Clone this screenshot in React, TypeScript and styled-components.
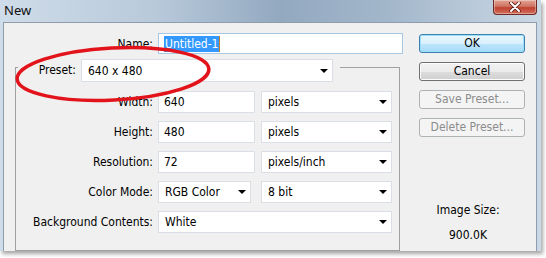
import styled, { createGlobalStyle } from 'styled-components'

const GlobalStyle = createGlobalStyle`
  html, body {
    margin: 0;
    padding: 0;
    background: #ffffff;
  }
  body {
    width: 546px;
    height: 258px;
    overflow: hidden;
    font-family: "DejaVu Sans Condensed", "DejaVu Sans", sans-serif;
    font-size: 12px;
    color: #000;
  }
`

const Page = styled.div`
  position: relative;
  width: 546px;
  height: 258px;
`

const Window = styled.div`
  display: flex;
  flex-direction: column;
  width: 541px;
  height: 251px;
  background: linear-gradient(90deg, #cfdce9 0%, #b9cadb 28%, #93a9c0 52%, #a3b7cb 72%, #cbd8e5 100%);
  box-shadow: 2px 3px 4px rgba(0, 0, 0, 0.35);
`

const TitleBar = styled.div`
  display: flex;
  align-items: flex-start;
  justify-content: space-between;
  height: 22px;
  padding-left: 4px;
`

const Title = styled.span`
  font-family: "Noto Sans", "DejaVu Sans", sans-serif;
  font-size: 13px;
  line-height: 20px;
  color: #111;
`

const CloseButton = styled.div`
  display: flex;
  align-items: center;
  justify-content: center;
  width: 42px;
  height: 14px;
  margin-right: 4px;
  border: 1px solid #6d2a22;
  border-top: none;
  border-radius: 0 0 4px 4px;
  background: linear-gradient(180deg, #e2a392 0%, #d07463 45%, #c0412f 55%, #d2705c 100%);
  box-shadow: inset 0 0 0 1px rgba(255, 255, 255, 0.35);
`

const Content = styled.div`
  flex: 1;
  display: flex;
  margin: 0 4px 0 3px;
  overflow: hidden;
  background: #f0f0f0;
  border-top: 1px solid #8e9cab;
  border-left: 1px solid #8e9cab;
  border-right: 1px solid #8e9cab;
`

const FormColumn = styled.div`
  display: flex;
  flex-direction: column;
  width: 396px;
  flex-shrink: 0;
  padding-top: 10px;
`

const NameRow = styled.div`
  display: flex;
  align-items: center;
  height: 21px;
`

const Label = styled.div<{ $width: number }>`
  width: ${p => p.$width}px;
  margin-right: 5px;
  flex-shrink: 0;
  text-align: right;
  line-height: 22px;
  white-space: nowrap;
`

const Field = styled.div<{ $width: number; $focused?: boolean; $height?: number }>`
  box-sizing: border-box;
  display: flex;
  align-items: center;
  flex-shrink: 0;
  width: ${p => p.$width}px;
  height: ${p => p.$height ?? 22}px;
  padding-left: 5px;
  background: #fff;
  border: 1px solid ${p => (p.$focused ? '#a7c8e4' : '#dadfe6')};
  white-space: nowrap;
`

const Selected = styled.span`
  background: #3399ff;
  color: #fff;
  padding: 1px;
  border-right: 1px solid #d0801c;
`

const SelectBox = styled(Field)`
  position: relative;
  padding-left: 6px;
`

const Arrow = styled.span`
  position: absolute;
  right: 4px;
  top: 50%;
  margin-top: -2px;
  width: 0;
  height: 0;
  border-left: 4px solid transparent;
  border-right: 4px solid transparent;
  border-top: 4px solid #000;
`

const GroupBox = styled.fieldset`
  box-sizing: border-box;
  width: 385px;
  height: 240px;
  margin: 5px 0 0 11px;
  padding: 16px 0 0 0;
  border: 1px solid #a0a0a0;
  min-width: 0;
`

const PresetLegend = styled.legend`
  display: flex;
  align-items: flex-start;
  height: 16px;
  margin-left: 2px;
  padding: 0 7px 0 0;
`

const Row = styled.div`
  display: flex;
  align-items: center;
  height: 22px;
  margin-bottom: 8px;
`

const Gap = styled.div<{ $w: number }>`
  width: ${p => p.$w}px;
  flex-shrink: 0;
`

const SideColumn = styled.div`
  display: flex;
  flex-direction: column;
  width: 136px;
  padding-top: 11px;
`

const ButtonStack = styled.div`
  display: flex;
  flex-direction: column;
  gap: 9px;
  padding-left: 19px;
`

const Button = styled.div<{ $variant: 'default' | 'normal' | 'disabled' }>`
  box-sizing: border-box;
  width: 106px;
  height: 19px;
  display: flex;
  align-items: center;
  justify-content: center;
  border-radius: 3px;
  line-height: 17px;
  ${p =>
    p.$variant === 'default'
      ? `
    border: 1px solid #3c7fb1;
    background: linear-gradient(180deg, #eaf6fd 0%, #d9f0fc 50%, #bee6fd 51%, #a7d9f5 100%);
    box-shadow: inset 0 0 0 1px #9ce0f8;
    color: #000;
  `
      : p.$variant === 'normal'
      ? `
    border: 1px solid #707070;
    background: linear-gradient(180deg, #f2f2f2 0%, #ebebeb 50%, #dddddd 51%, #cfcfcf 100%);
    box-shadow: inset 0 0 0 1px #fcfcfc;
    color: #000;
  `
      : `
    border: 1px solid #adb2b5;
    background: #f4f4f4;
    color: #8c8c8c;
  `}
`

const ImageInfo = styled.div`
  margin-top: 65px;
  text-align: center;
  line-height: 16px;
`

const InfoValue = styled.div`
  margin-top: 9px;
`

const Annotation = styled.svg`
  position: absolute;
  left: 0;
  top: 0;
  pointer-events: none;
`

export default function App() {
  return (
    <Page>
      <GlobalStyle />
      <Window>
        <TitleBar>
          <Title>New</Title>
          <CloseButton>
            <svg width="14" height="10" viewBox="0 0 14 10">
              <path d="M3 1 L11 9 M11 1 L3 9" stroke="#5a1a14" strokeWidth="3.6" strokeLinecap="round" />
              <path d="M3 1 L11 9 M11 1 L3 9" stroke="#ffffff" strokeWidth="2" strokeLinecap="round" />
            </svg>
          </CloseButton>
        </TitleBar>
        <Content>
          <FormColumn>
            <NameRow>
              <Label $width={149}>Name:</Label>
              <Field $width={245} $height={21} $focused>
                <Selected>Untitled-1</Selected>
              </Field>
            </NameRow>
            <GroupBox>
              <PresetLegend>
                <Label $width={58}>Preset:</Label>
                <SelectBox $width={252} $height={23}>
                  640 x 480
                  <Arrow />
                </SelectBox>
              </PresetLegend>
              <Row>
                <Label $width={137}>Width:</Label>
                <Field $width={97}>640</Field>
                <Gap $w={6} />
                <SelectBox $width={131}>
                  pixels
                  <Arrow />
                </SelectBox>
              </Row>
              <Row>
                <Label $width={137}>Height:</Label>
                <Field $width={97}>480</Field>
                <Gap $w={6} />
                <SelectBox $width={131}>
                  pixels
                  <Arrow />
                </SelectBox>
              </Row>
              <Row>
                <Label $width={137}>Resolution:</Label>
                <Field $width={97}>72</Field>
                <Gap $w={6} />
                <SelectBox $width={131}>
                  pixels/inch
                  <Arrow />
                </SelectBox>
              </Row>
              <Row>
                <Label $width={137}>Color Mode:</Label>
                <SelectBox $width={93}>
                  RGB Color
                  <Arrow />
                </SelectBox>
                <Gap $w={10} />
                <SelectBox $width={131}>
                  8 bit
                  <Arrow />
                </SelectBox>
              </Row>
              <Row>
                <Label $width={137}>Background Contents:</Label>
                <SelectBox $width={234}>
                  White
                  <Arrow />
                </SelectBox>
              </Row>
            </GroupBox>
          </FormColumn>
          <SideColumn>
            <ButtonStack>
              <Button $variant="default">OK</Button>
              <Button $variant="normal">Cancel</Button>
              <Button $variant="disabled">Save Preset...</Button>
              <Button $variant="disabled">Delete Preset...</Button>
            </ButtonStack>
            <ImageInfo>
              <div>Image Size:</div>
              <InfoValue>900.0K</InfoValue>
            </ImageInfo>
          </SideColumn>
        </Content>
      </Window>
      <Annotation width="546" height="258" viewBox="0 0 546 258">
        <ellipse
          cx="113"
          cy="74"
          rx="96"
          ry="26"
          transform="rotate(-3 113 74)"
          fill="none"
          stroke="#e3131b"
          strokeWidth="3.5"
        />
      </Annotation>
    </Page>
  )
}
